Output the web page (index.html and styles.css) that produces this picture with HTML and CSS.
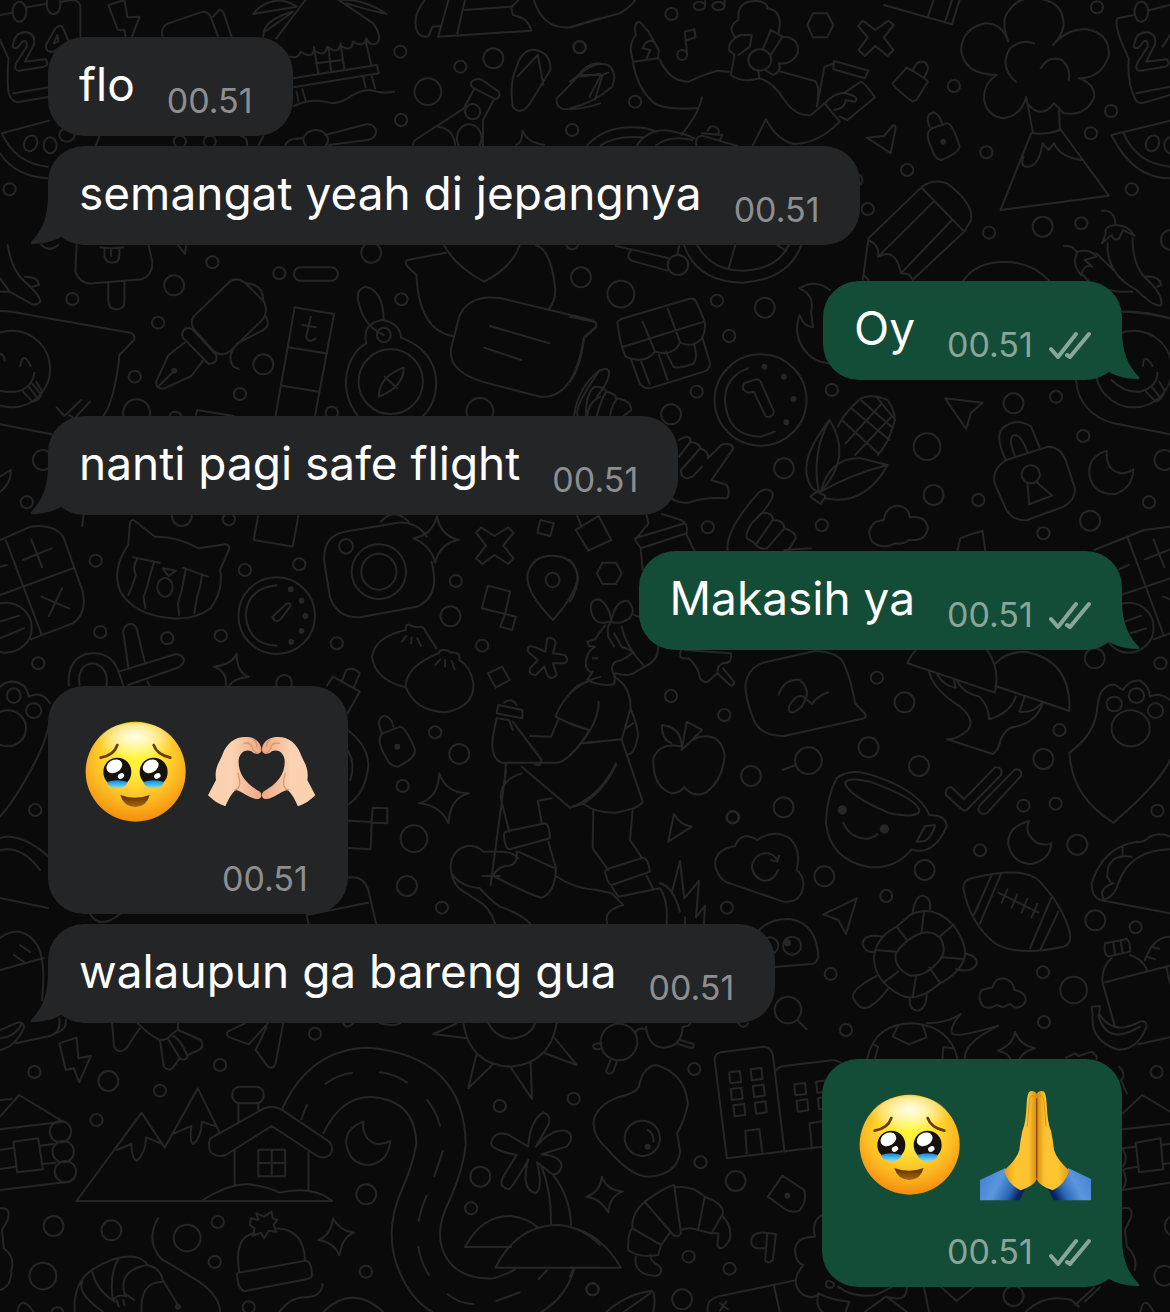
FILE: index.html
```html
<!DOCTYPE html>
<html lang="id">
<head>
<meta charset="utf-8">
<meta name="viewport" content="width=device-width, initial-scale=1">
<title>Chat</title>
<link rel="stylesheet" href="styles.css">
</head>
<body>
<svg class="wallpaper" viewBox="0 0 1170 1312" preserveAspectRatio="xMidYMin slice" aria-hidden="true">
<defs>
<ellipse id="s" rx="16" ry="18"/>
<ellipse id="m" rx="26" ry="30"/>
<ellipse id="l" rx="35" ry="40"/>
<ellipse id="f" class="solid" rx="5" ry="6"/>
<path id="w" d="M0 0l28-4 3 33-28 4z"/>
<path id="two" d="M35 130Q40 95 70 97Q95 105 88 135L65 185L120 178Q130 195 115 200L50 212Q35 212 42 190L70 140Q70 115 58 125Q50 140 42 145Q30 145 35 130Z"/>
</defs>
<g transform="scale(.3827 .3333)">
<path d="M0 45L30 38M70 22L118 12M158 6L185 0Q208 0 210 20V112M0 120L22 175Q18 230 22 275Q25 300 45 307L130 290M35 280L128 262M120 135L145 85Q160 70 165 85L178 120M120 135Q118 158 140 155L165 135M140 130L150 105L153 125Z"/>
<ellipse cx="51" cy="35" rx="18" ry="30"/><ellipse cx="140" cy="12" rx="18" ry="30"/><use href="#two"/>
<path d="M325 0L333 52L365 50L345 110M325 0L283 15L308 90H325L328 110M425 110Q418 80 440 70L530 35Q545 35 550 50L570 110M557 50L572 30Q580 28 585 40L605 110"/>
<path d="M662 42Q680 10 720 2Q750 0 775 20Q720 30 662 42M688 110Q685 60 765 35M692 95L760 40M722 115L798 0M885 0L975 70Q1000 110 985 130Q965 140 958 115Q952 145 922 125Q920 160 888 135Q885 165 855 140Q850 175 820 150Q815 178 785 155Q780 178 757 170M885 0Q950-5 1010 42Q960 30 905 10M820 140L832 222M858 140L865 215M890 130L900 210M955 120L970 195M825 190L895 180M832 222L900 210M765 235L985 195L990 220L767 262M950 232L955 262M972 230L980 265M775 275L780 305M790 268L798 300M768 318Q810 295 850 305Q880 318 915 290Q955 260 985 275Q1010 280 1030 275"/>
<path d="M1110 0Q1075 50 1090 95Q1100 115 1120 108L1130 80L1150 78M1172 0L1145 110L1388 92Q1382 55 1340 45L1335 22L1355 0M1215 0L1195 100M1215 30L1340 20M1395 0Q1420 90 1490 82L1568 55"/>
<path d="M1340 320Q1330 250 1350 200Q1365 145 1400 150Q1440 160 1438 210L1385 310Q1360 350 1340 320ZM1352 230L1405 165L1420 255M1568 190Q1530 190 1510 230L1455 295Q1450 330 1490 328Q1530 325 1568 310M1510 230L1568 222M1540 290L1568 230"/>
<path d="M1232 245Q1245 232 1260 240L1303 275Q1310 290 1295 298L1235 262Q1228 255 1232 245ZM1240 265L1212 325L1085 420Q1078 430 1080 438M1290 300L1262 360V438M1145 380Q1185 385 1190 438M1348 435Q1365 430 1365 392Q1380 430 1422 434"/>
<ellipse cx="1235" cy="335" rx="20" ry="23"/><ellipse cx="1226" cy="415" rx="32" ry="42"/>
<path d="M128 362L5 400Q40 490 125 500M0 460Q40 530 125 535M745 438Q750 415 790 415M850 405L960 372Q985 375 982 400Q980 415 960 420L860 435M645 438Q650 415 630 408M675 438L688 408M250 438L260 408"/>
<ellipse cx="80" cy="430" rx="17" ry="24" transform="rotate(15 80 430)"/><ellipse cx="131" cy="436" rx="17" ry="24"/><ellipse cx="175" cy="405" rx="20" ry="20"/><ellipse cx="825" cy="420" rx="32" ry="30"/>
<use href="#s" x="1046" y="155"/><use href="#s" x="1203" y="200"/><use href="#s" x="1515" y="142"/><use href="#s" x="1048" y="360"/><use href="#s" x="1495" y="390"/><use href="#s" x="25" y="568"/><use href="#s" x="470" y="425"/><use href="#s" x="548" y="425"/><use href="#m" x="1289" y="175"/><use href="#l" x="1118" y="275"/>
</g>
<g transform="translate(570) scale(.3827 .3333)">
<path d="M0 82L130 40Q160 20 170 0M0 245L40 210Q70 185 100 195Q125 220 110 260Q60 310 0 325M20 225H85L65 300M100 218L85 225"/>
<ellipse cx="338" cy="18" rx="15" ry="12"/><ellipse cx="388" cy="18" rx="16" ry="12"/><ellipse cx="293" cy="165" rx="13" ry="15"/>
<path d="M353 15V0M404 15V0M306 165L300 95L325 88L328 112L302 122"/>
<path d="M165 185L230 175L232 150L205 95L182 65Q165 65 172 105Q155 130 160 160ZM190 145Q200 115 218 125M190 145L210 150L200 175M165 190Q175 260 215 305Q240 330 330 325M235 180Q260 245 310 245Q345 225 385 212L415 215M345 292Q335 340 310 375L292 405"/>
<path d="M430 110Q410 80 440 60Q435 0 490 3Q520 10 515 25Q550 30 548 75L545 100M445 105L475 105L470 140L440 165M445 105Q415 120 415 150L430 165L420 225Q450 250 495 235L492 210M505 145L525 90L555 110L525 165M555 110Q600 110 595 160Q580 195 545 190Q555 215 530 225L510 210M550 215L640 243Q655 260 645 320M495 235Q530 245 560 300Q590 350 630 345L665 310L705 365M665 310Q690 280 715 278Q760 290 745 305L720 300Q720 325 690 330M645 320L665 200L685 192M690 183L780 212L770 235L688 208ZM715 280L760 245Q770 250 797 292L725 360L705 350M705 365Q650 430 585 432Q540 420 512 358L478 436"/>
<ellipse cx="496" cy="180" rx="30" ry="32"/>
<path d="M45 436Q90 380 165 382Q200 382 225 395M80 436Q120 405 190 412M175 436Q205 385 260 392Q300 400 325 415M225 436Q260 405 320 420M330 436Q325 410 345 407L438 438M345 400L398 405L392 420M360 392Q365 375 378 380Q392 385 388 402"/>
<path d="M635 40H672L688 75L672 112H635L620 75ZM765 62L798 90L832 62L846 75L820 112L845 150L830 168L798 138L770 168L754 150L778 112L753 78ZM820 15L998 73L1018 0M935 50L950 0M980 65L998 0M880 203L843 250Q845 262 895 305L905 300L935 245Q930 235 880 203ZM897 210Q905 180 925 185Q945 200 925 232"/>
<path d="M945 385L985 370Q1000 370 1018 440Q1015 460 970 480Q955 480 945 445Q925 400 945 385ZM940 380Q925 345 950 337Q968 345 972 372M775 413L820 408L845 375Q852 375 850 390L838 460L815 442Z"/>
<path d="M1145 125Q1125 60 1145 35Q1170-10 1215-5Q1290 0 1290 75Q1285 110 1262 135M1145 125Q1130 70 1085 70Q1025 85 1022 150Q1030 225 1115 225Q1080 250 1082 300Q1090 350 1135 355Q1180 345 1192 290L1210 400Q1245 405 1280 390L1278 325M1262 135Q1300 85 1350 88Q1410 100 1408 165Q1390 235 1330 235Q1370 250 1370 290Q1350 350 1290 340L1265 310Q1230 360 1195 310M1213 130Q1180 115 1150 145Q1120 200 1165 245M1230 205Q1250 165 1285 180Q1310 205 1303 240M1205 400L1125 630L1408 587L1283 390M1185 470Q1175 500 1195 500Q1225 500 1235 430L1250 450L1265 430Q1280 470 1335 480"/>
<path d="M1475 45L1430 55Q1420 80 1460 175Q1455 250 1478 300Q1485 312 1500 308L1568 285M1480 280L1568 260M1515 30L1568 15M1548 140L1568 105M1568 362L1415 405Q1470 535 1568 535M1447 400Q1480 490 1568 500"/>
<ellipse cx="1493" cy="35" rx="18" ry="30"/><use href="#two" x="1440"/><ellipse cx="1522" cy="430" rx="17" ry="24" transform="rotate(15 1522 430)"/><ellipse cx="1570" cy="436" rx="17" ry="24"/>
<path d="M765 840L780 715L920 560Q950 535 985 550Q1055 610 1048 660L1030 695L895 840M920 565L1030 695M950 605L805 770M998 660L865 820M780 720Q810 735 805 770Q850 740 865 820Q890 820 892 835M768 825L780 840M1028 842Q1060 785 1140 785Q1210 790 1252 842"/>
<path d="M1390 632Q1425 630 1425 675Q1395 680 1400 700L1390 730L1415 705Q1420 725 1435 715L1445 690L1475 708Q1460 675 1425 675M1405 730Q1400 820 1480 870Q1530 925 1545 915Q1550 880 1500 830Q1470 790 1470 715M1500 830Q1540 825 1545 855L1535 860M1290 738Q1315 735 1325 760Q1310 790 1335 825Q1345 790 1365 800L1345 780L1375 770Q1360 745 1325 755M1340 825Q1370 870 1440 875L1470 875M1375 760L1420 810M1442 935Q1500 935 1568 955"/>
<path d="M298 735Q330 845 450 848Q570 840 605 735M332 735Q370 812 450 812Q540 810 572 735M432 735L415 803M540 735L565 752M120 738L175 752L258 775M160 750Q145 770 160 782L255 812M285 738L280 765"/>
<ellipse cx="282" cy="795" rx="27" ry="30"/><use href="#f" x="975" y="425"/>
<use href="#s" x="265" y="42"/><use href="#s" x="25" y="142"/><use href="#s" x="170" y="305"/><use href="#s" x="1003" y="258"/><use href="#s" x="1088" y="457"/><use href="#s" x="881" y="510"/><use href="#s" x="1377" y="22"/><use href="#s" x="1414" y="333"/><use href="#s" x="1361" y="400"/><use href="#s" x="1468" y="568"/><use href="#s" x="778" y="627"/><use href="#s" x="1095" y="698"/><use href="#s" x="1336" y="670"/><use href="#m" x="1235" y="680"/><use href="#m" x="1570" y="720"/><use href="#s" x="748" y="540"/>
</g>
<g transform="translate(0 240) scale(.3827 .3333)">
<path d="M200 15L197 95Q210 135 245 130L370 118Q400 105 398 65L388 15M283 130V185Q285 208 303 208Q325 208 325 185V125M262 22Q290 28 322 22M273 25V50Q278 68 293 68Q312 68 312 45V25M290 30V48M465 15L483 42L487 15M108 15Q130 38 152 15"/>
<path d="M20 15Q30 90 65 125Q105 165 105 185Q95 200 80 190L25 155L0 115M0 155H25M65 110Q100 110 102 135L85 140M0 213Q15 212 30 215L340 278Q355 285 350 300L312 345Q300 480 270 528M0 553L135 583M0 340Q12 345 12 362M53 378Q60 330 80 378M0 452Q80 470 90 398M60 455L85 485Q110 480 108 450L95 425M75 440L95 470M85 432L105 460M148 502L168 528L212 480M180 525L195 535L235 485"/>
<ellipse cx="31" cy="387" rx="100" ry="115"/>
<path d="M600 125Q620 110 640 128L690 185Q702 215 685 240L600 335Q580 350 560 335L505 265Q495 240 510 225ZM645 130Q690 135 688 185M695 230Q710 260 680 275L620 310Q590 350 610 380L625 388M480 270Q490 258 505 270L565 345Q570 370 545 372L480 295Q472 285 480 270ZM482 308L440 345L408 425Q408 450 430 445L500 408L530 362M415 438L455 393"/>
<rect x="768" y="82" width="115" height="40" rx="18" ry="20"/>
<path d="M720 528L770 202L873 222L823 528M753 322L850 340M738 437L833 455M812 230L800 290Q805 312 825 295M790 255L825 262M512 525L515 510L610 528M675 825L663 900L765 920L780 825M218 825L215 858"/>
<ellipse cx="1021" cy="425" rx="84" ry="97"/><ellipse cx="1003" cy="285" rx="18" ry="22"/>
<path d="M935 528Q890 460 910 380Q925 330 957 310Q945 250 1000 240Q1045 250 1048 293Q1135 330 1140 425Q1140 490 1105 528M990 470Q990 410 1055 383Q1055 440 990 470M1005 410L1038 445M1003 238Q1000 150 955 140Q925 150 940 200Q955 260 1003 285"/>
<path d="M1165 38L1065 60Q1055 65 1065 80L1088 105Q1095 270 1182 288M1160 15Q1190 80 1265 125Q1340 80 1358 15M1400 15Q1440 30 1450 140Q1455 180 1432 210M1200 230Q1225 160 1310 175L1545 240Q1565 250 1555 265L1525 295Q1500 480 1410 470L1260 425Q1160 390 1182 310ZM1280 258L1435 310M1265 323L1362 360M1500 528Q1510 440 1568 390M1535 528Q1535 490 1568 470M0 755Q30 730 28 690L0 710"/>
<use href="#f" x="455" y="392"/>
<use href="#s" x="555" y="67"/><use href="#s" x="189" y="177"/><use href="#s" x="413" y="248"/><use href="#s" x="352" y="410"/><use href="#s" x="627" y="462"/><use href="#s" x="867" y="518"/><use href="#s" x="730" y="100"/><use href="#s" x="1049" y="178"/><use href="#s" x="70" y="787"/><use href="#s" x="598" y="838"/><use href="#s" x="458" y="533"/><use href="#s" x="1495" y="10"/><use href="#m" x="455" y="136"/><use href="#m" x="688" y="373"/><use href="#m" x="970" y="38"/><use href="#m" x="1518" y="112"/><use href="#m" x="475" y="828"/><use href="#l" x="357" y="518"/><use href="#l" x="1254" y="514"/><use href="#m" x="112" y="660"/>
</g>
<g transform="translate(570 240) scale(.3827 .3333)">
<path d="M0 230L65 245Q75 255 60 268L38 290Q25 390 0 425M125 255Q120 240 140 235L310 177Q325 172 332 190L352 245Q355 270 345 295Q320 325 288 308Q270 350 222 335Q195 375 145 350Q130 310 125 255ZM135 322L350 245M190 245L222 335M255 205L288 308M160 360L182 430Q195 450 215 443L350 395Q370 385 365 365L345 290M185 362L208 432M232 345L255 420M250 335L270 380Q280 388 320 372Q335 362 325 315"/>
<ellipse cx="498" cy="480" rx="120" ry="137"/>
<path d="M465 385Q405 410 405 480Q410 590 500 590L535 575M455 430L485 418Q497 418 500 430L533 515Q530 535 512 530L480 455L465 458Q445 450 455 430"/>
<use href="#f" x="508" y="380"/><use href="#f" x="559" y="410"/><use href="#f" x="584" y="477"/><use href="#f" x="565" y="547"/>
<path d="M680 150Q640 115 600 145Q640 165 630 215L635 262Q610 260 600 225Q580 290 620 340Q640 365 675 370"/>
<path d="M20 528Q10 500 75 395Q95 378 102 395Q105 420 70 470M42 528Q40 460 65 440Q90 440 95 455Q120 460 120 475Q160 480 160 510L140 528M70 528Q80 480 95 455M105 525Q110 490 125 475M285 600Q315 580 315 605Q340 610 340 625Q365 635 360 655L395 615Q420 605 427 625L370 720L410 735Q420 760 410 775Q350 770 310 788Q285 790 265 775M285 650L315 605M290 690L340 625M345 680L320 710Q290 725 290 690L330 640"/>
<path d="M412 932Q405 870 495 755Q520 740 530 760Q530 790 475 850Q450 895 470 900Q480 905 485 915L530 840M475 850L500 820Q530 815 530 840Q560 840 560 865Q590 875 590 895L570 932M485 915Q500 930 515 925L560 865M560 930L630 925"/>
<path d="M678 540Q610 640 618 700Q625 750 650 755M678 540Q740 650 655 755M678 540Q630 640 650 755M655 755Q680 650 760 655L830 675Q770 800 665 775M655 755Q740 700 830 675M628 770L655 792L668 768L645 755ZM700 560Q715 520 760 475Q790 460 830 480Q860 530 840 570Q835 600 805 645M710 540L805 640M735 505L835 600M760 480L840 560M720 610L815 490M745 645L840 530M800 470L850 540"/>
<path d="M790 905Q770 870 800 845L820 840Q825 800 855 797Q885 800 888 832Q930 825 935 865Q930 905 885 900Q870 915 850 910Q815 930 790 905ZM980 475L1078 488L1048 518L1035 567Z"/>
<path d="M1140 660L1250 620Q1280 620 1295 660L1318 740Q1325 775 1290 800L1195 840Q1160 845 1140 810L1110 730Q1100 690 1140 660ZM1138 658Q1110 590 1130 565Q1165 530 1205 560Q1215 590 1227 622M1163 650Q1140 585 1165 585Q1180 590 1195 635M1195 728L1200 793L1260 767L1218 725"/>
<ellipse cx="1204" cy="703" rx="24" ry="27"/>
<path d="M1403 632Q1350 650 1358 710Q1370 765 1425 762Q1470 745 1472 688Q1435 715 1410 680Q1400 660 1403 632ZM1322 420Q1330 520 1420 550L1568 583M1442 215Q1500 212 1568 235M1497 378Q1500 335 1522 378M1415 420Q1450 460 1490 455Q1535 440 1535 398M1505 455L1530 485Q1550 480 1553 450L1540 425M1520 440L1540 470M1012 932L1020 895Q1050 880 1078 873L1085 932"/>
<ellipse cx="1473" cy="387" rx="100" ry="115"/>
<path d="M15 870L75 828L108 900L48 932ZM18 825L30 860M200 825L205 850L170 900L185 925L305 880Q310 850 290 840L240 822M170 895L300 850M185 930L190 990M305 885L325 932"/>
<use href="#s" x="384" y="182"/><use href="#s" x="416" y="288"/><use href="#s" x="331" y="455"/><use href="#s" x="684" y="450"/><use href="#s" x="1270" y="470"/><use href="#s" x="1341" y="588"/><use href="#s" x="1067" y="780"/><use href="#s" x="1237" y="880"/><use href="#s" x="658" y="856"/><use href="#s" x="360" y="862"/><use href="#s" x="1513" y="787"/><use href="#m" x="509" y="203"/><use href="#m" x="264" y="523"/><use href="#m" x="559" y="685"/><use href="#m" x="950" y="765"/><use href="#m" x="1159" y="490"/><use href="#m" x="1359" y="842"/><use href="#m" x="1553" y="660"/><use href="#l" x="933" y="620"/><use href="#l" x="133" y="162"/>
</g>
<g transform="translate(0 500) scale(.3827 .3333)">
<path d="M0 120L80 80Q140 70 165 110L215 270Q230 340 190 370L80 418M15 120L108 402M0 285L190 205M60 180L135 145M82 118L110 202M108 290L180 325M162 265L128 348M0 200L18 195M0 365L50 347M0 415L62 385"/>
<ellipse cx="15" cy="383" rx="68" ry="75"/>
<path d="M335 135L340 65Q345 55 355 65L405 110Q460 108 520 145L590 133Q602 135 598 150L575 210Q585 270 550 325Q510 360 450 355Q350 345 315 275Q290 210 335 135M348 172L418 188M478 203L543 230M358 178Q345 200 355 225L345 260L335 285M402 190Q390 230 385 260L375 290L380 325M485 210Q480 240 475 270L465 310L468 345M528 225Q525 260 515 290L508 340M425 205L460 212L440 228Z"/>
<ellipse cx="431" cy="262" rx="20" ry="28"/><ellipse cx="723" cy="347" rx="100" ry="115"/>
<path d="M723 256Q645 265 642 347Q650 435 723 437M750 310Q762 308 758 320L735 355Q720 375 712 350Z"/>
<use href="#f" x="760" y="268"/><use href="#f" x="788" y="302"/><use href="#f" x="798" y="348"/><use href="#f" x="788" y="393"/><use href="#f" x="761" y="425"/>
<path d="M995 65Q1030 20 1068 65M900 95L1040 68Q1090 65 1115 110M1128 185L1132 210Q1145 290 1090 320L940 352Q880 355 862 290L848 190Q840 110 900 95M1142 48Q1150 105 1198 120Q1150 130 1137 188Q1125 135 1080 115Q1130 105 1142 48ZM1257 82L1292 108L1328 82L1342 98L1315 137L1342 175L1328 192L1292 165L1260 192L1244 175L1270 137L1244 98Z"/>
<ellipse cx="990" cy="215" rx="71" ry="82"/><ellipse cx="990" cy="215" rx="46" ry="54"/><ellipse cx="904" cy="139" rx="18" ry="22"/><ellipse cx="1444" cy="240" rx="18" ry="22"/>
<path d="M1412 60L1447 70L1438 108L1404 98ZM1275 257L1333 275L1320 342L1259 325ZM1320 342L1348 350L1338 390L1307 380ZM1275 520L1312 500L1332 540L1295 563ZM1445 360Q1375 280 1378 225Q1390 165 1445 167Q1505 170 1510 235Q1500 290 1445 360M1060 562Q980 540 972 470Q980 410 1060 390Q1060 365 1075 378L1090 382Q1108 375 1112 395L1140 445M1145 460Q1060 500 1060 560Q1085 635 1165 637Q1240 620 1237 550Q1230 500 1200 480Q1205 455 1180 458Q1155 440 1145 460M1062 408L1050 425M1076 412L1074 430M1090 415L1100 438M1150 478L1138 495M1163 480V500M1180 483L1188 508"/>
<path d="M180 556Q175 480 225 462Q290 450 310 515L322 556M208 556Q200 495 242 490Q285 500 278 556M335 500L322 395Q325 370 345 372Q358 378 360 400L378 485M310 515L460 462Q482 465 480 485Q475 498 460 505L335 555M385 545L390 556M618 462Q620 520 650 530Q610 535 598 558M590 556Q595 515 558 500Q605 495 618 462M722 556Q720 530 740 525Q765 525 762 556M855 556L870 530L940 575L908 640M893 545L905 510Q925 500 940 520L925 560"/>
<path d="M1000 700L1045 680Q1060 680 1085 750Q1085 775 1040 800Q1020 800 1010 775Q980 720 1000 700ZM998 700Q980 655 1005 647Q1025 655 1028 680M1148 820Q1165 880 1225 880Q1175 895 1172 970Q1150 915 1095 910Q1145 895 1148 820ZM1430 415Q1450 410 1452 430L1445 460L1475 465Q1490 480 1475 490L1445 490L1455 525Q1445 540 1432 530L1422 500L1400 525Q1380 525 1385 505L1405 480L1380 455Q1375 435 1395 440L1425 455Z"/>
<path d="M908 690Q965 740 962 800Q955 880 910 913M908 750Q930 790 915 840M0 560Q30 530 65 560Q75 580 75 590Q110 570 130 610M132 640Q130 700 90 790Q40 900 0 950"/>
<ellipse cx="36" cy="587" rx="18" ry="22"/><ellipse cx="88" cy="632" rx="20" ry="22"/><ellipse cx="20" cy="685" rx="48" ry="54"/>
<path d="M1292 685Q1275 770 1310 788L1460 788Q1500 770 1540 690M1302 615L1365 630V655L1298 640ZM1298 655L1330 660L1340 690M1298 655L1292 685M1318 608Q1335 590 1350 615M1340 665L1415 780Q1412 805 1395 790M1385 708L1440 710L1460 655M1568 530Q1480 560 1452 650Q1500 680 1540 690M1322 790L1318 850M1520 730L1568 725"/>
<use href="#f" x="1038" y="740"/>
<use href="#s" x="250" y="182"/><use href="#s" x="640" y="210"/><use href="#s" x="782" y="193"/><use href="#s" x="1191" y="243"/><use href="#s" x="262" y="396"/><use href="#s" x="437" y="415"/><use href="#s" x="577" y="407"/><use href="#s" x="880" y="430"/><use href="#s" x="1260" y="437"/><use href="#s" x="100" y="490"/><use href="#s" x="1137" y="697"/><use href="#s" x="1052" y="858"/><use href="#s" x="92" y="930"/><use href="#m" x="1177" y="349"/><use href="#m" x="1200" y="762"/>
</g>
<g transform="translate(570 500) scale(.3827 .3333)">
<path d="M105 365Q60 380 55 330Q50 300 75 298Q100 310 108 360Q120 300 150 302Q175 330 155 355Q130 375 105 365M105 370Q95 380 100 410L115 440M92 375L65 418L45 425L50 438L65 440Q38 460 42 500Q50 520 60 515L45 540Q75 560 115 553L118 530Q100 500 120 485Q145 480 165 455L135 440L115 400M135 380Q145 440 195 500M168 345L190 355M118 520Q150 530 165 520Q180 510 195 500Q235 480 230 430M60 475H72M45 545Q20 550 0 580M115 530Q160 560 158 625L135 720L190 905Q180 925 120 938Q70 940 35 912M75 605Q75 680 0 765M0 670L45 688M28 730L135 718M158 625Q185 700 175 720Q170 760 150 765M145 685L165 670M120 795Q90 870 35 910Q15 920 0 922"/>
<path d="M290 452Q280 480 310 475Q335 500 340 535Q350 550 360 545L385 520Q385 495 400 490Q425 490 420 460L300 450M385 520L420 557Q432 555 428 545L400 505M515 485L640 453Q700 455 715 490Q735 540 745 610L770 640Q778 655 760 657L560 708Q500 710 480 660Q450 570 462 535Q475 495 515 485M545 585Q560 535 600 540Q635 570 605 620Q570 655 572 620Q590 580 610 590L632 612Q650 585 675 577M555 810L590 795M85 188H120L135 220L120 252H85L70 220ZM0 180Q40 230 0 305"/>
<path d="M292 740Q235 725 218 775Q215 860 265 880Q285 880 298 862Q325 895 355 878Q400 840 404 765Q395 700 340 710L320 720M292 750L305 665L345 690ZM292 740Q290 680 240 675Q240 720 265 730"/>
<path d="M905 450Q890 465 882 490L1110 578Q1125 510 1090 450M1112 490Q1140 455 1190 455Q1310 480 1305 633L1112 558M938 515Q950 570 1020 620Q1060 660 1040 690Q1010 720 985 718L1105 762Q1120 750 1125 720Q1140 680 1165 680Q1220 665 1235 610M1012 545Q1030 580 1070 590Q1095 620 1095 658Q1150 640 1165 590M960 525Q980 560 1008 563L1003 540M1188 590L1175 635Q1210 640 1232 610"/>
<path d="M1568 600Q1540 575 1515 590Q1515 560 1490 542Q1460 540 1445 570L1425 555Q1385 550 1378 620Q1375 700 1305 758Q1310 890 1420 968Q1540 850 1568 780"/>
<ellipse cx="1422" cy="612" rx="20" ry="22"/><ellipse cx="1480" cy="587" rx="20" ry="22"/><ellipse cx="1530" cy="632" rx="20" ry="22"/><ellipse cx="1465" cy="685" rx="50" ry="54"/><ellipse cx="1460" cy="383" rx="65" ry="75"/>
<path d="M1370 150L1500 90L1568 80M1458 115L1550 402M1440 285L1568 235M1502 178L1568 148M1525 118L1553 202M1435 208L1460 195M1450 365L1492 347M1465 400L1505 385M1525 418L1568 400M1550 290L1568 298"/>
<use href="#s" x="264" y="588"/><use href="#s" x="403" y="645"/><use href="#s" x="802" y="533"/><use href="#s" x="1279" y="690"/><use href="#s" x="426" y="952"/><use href="#s" x="1185" y="917"/><use href="#s" x="1269" y="911"/><use href="#s" x="1535" y="932"/><use href="#s" x="1543" y="490"/><use href="#m" x="874" y="607"/><use href="#m" x="780" y="742"/><use href="#m" x="912" y="798"/><use href="#m" x="473" y="828"/><use href="#m" x="558" y="922"/><use href="#m" x="1237" y="777"/><use href="#m" x="1371" y="475"/><use href="#l" x="623" y="782"/>
</g>
<g transform="translate(300 760) scale(.3333)">
<path d="M145 182L215 186L212 268L145 264M215 186L218 143L262 145V190L215 188M145 353Q190 345 205 390L228 490M25 490L20 465L205 428"/>
<path d="M665 40Q600 60 602 115L628 215M618 30L572 375M548 348H600M665 20L810 143Q900 110 948 10M755 115L713 122L725 188M880 150L878 265L925 330M998 150L990 240L1025 292M612 228Q610 215 625 213L735 190Q748 192 750 235L630 268Q615 268 612 228M745 245L768 325Q765 400 725 413Q700 410 575 345M655 275L765 325M650 275Q655 320 615 318Q590 325 578 348M655 295Q640 275 600 275L550 275Q530 255 500 258Q455 270 452 320Q455 380 500 400L530 420Q570 440 585 490M455 340Q480 380 540 385Q570 420 600 440Q660 460 690 490M768 348Q820 385 890 390L935 400L970 435Q910 450 922 490M918 345Q910 330 930 325L1030 293Q1045 295 1050 335L935 375Q925 375 918 345M935 380L955 410L1080 385Q1105 420 1100 490M1040 348L1060 388"/>
<path d="M1080 370Q1120 380 1140 455M1115 400L1140 303L1153 415L1197 363L1188 472L1215 437L1212 490M1155 472V490M1122 162Q1140 195 1175 200L1105 245Z"/>
<path d="M490 790Q510 915 632 920Q750 910 770 790M565 790Q590 835 635 836Q690 830 705 790M470 790L400 822L500 835M530 880L505 985L580 912M632 922L696 1017L692 908M765 835L830 915L735 880"/>
<circle cx="957" cy="846" r="55"/>
<path d="M1038 800Q1045 862 1092 863Q1145 860 1148 800M1005 820Q1015 800 1038 808M905 850Q875 850 880 862Q885 872 905 865M932 900L918 935Q925 948 940 935L950 905M1140 840L1180 852Q1188 868 1165 862L1130 850M1150 800Q1170 800 1170 790M130 790Q140 810 160 790M240 790Q280 800 300 790M1315 790Q1330 812 1345 790"/>
<circle cx="426" cy="443" r="18"/><circle cx="1298" cy="172" r="18"/><circle cx="1281" cy="443" r="18"/><circle cx="45" cy="821" r="18"/><circle cx="1183" cy="927" r="18"/><circle cx="321" cy="378" r="30"/><circle cx="342" cy="236" r="40"/>
</g>
<g transform="translate(670 760) scale(.3333)">
<path d="M500 55Q540 20 620 50Q750 95 778 165Q830 165 830 200Q790 290 725 268Q680 325 600 322Q480 300 468 190Q470 110 500 55ZM525 70Q530 50 600 65Q750 120 748 155Q735 175 660 160Q540 110 525 70ZM765 198L795 195Q790 225 765 243L740 245ZM520 188Q540 235 590 236Q610 235 622 222"/>
<circle class="solid" cx="517" cy="150" r="11"/><circle class="solid" cx="643" cy="207" r="11"/>
<path d="M828 105Q825 80 845 82L882 118L975 22Q1000 20 993 45L890 150Q882 155 875 148ZM925 150Q925 140 935 130L1035 28Q1058 25 1053 48L950 160Q930 165 925 150ZM1078 183Q1010 200 1015 255Q1030 312 1085 312Q1140 300 1144 250Q1100 265 1075 220Q1068 200 1078 183Z"/>
<path d="M195 258Q130 270 136 320Q150 365 180 370L340 425Q395 430 400 375Q400 345 380 330Q395 270 360 235Q310 205 262 240Q215 210 195 258ZM325 330Q310 365 280 362Q245 350 246 315Q260 275 295 280Q315 285 322 302M328 287L322 305L303 300M268 510Q300 475 360 477Q440 490 445 590Q440 610 425 612L303 622"/>
<circle cx="366" cy="557" r="27"/><circle cx="300" cy="557" r="25"/><circle class="solid" cx="352" cy="548" r="8"/>
<path d="M1500 230Q1470 215 1440 230Q1420 250 1400 245Q1300 260 1265 370Q1265 410 1290 420L1500 460M1290 420Q1330 420 1345 370Q1380 270 1500 268M1385 290Q1310 280 1312 350L1325 372M1358 262V285M1300 415Q1285 385 1330 370M460 463L560 415L528 522L505 480Z"/>
<path d="M905 355Q1060 315 1110 365Q1180 440 1200 520Q1205 555 1180 560Q1040 590 975 550Q900 490 880 385Q880 360 905 355ZM965 345L912 465M993 342L930 490M1145 412L1080 565M1165 455L1112 568M985 398L1105 458M1012 388L995 428M1042 403L1025 443M1072 417L1055 458M1102 432L1085 472"/>
<path d="M720 465Q790 430 850 495Q890 550 885 590Q870 640 810 670Q740 730 690 705Q610 660 612 590Q620 530 680 500ZM740 525Q780 505 812 535Q835 580 800 610Q760 655 715 645Q670 620 678 580Q700 545 740 525ZM762 455L755 517M850 495L808 530M880 597L818 592M810 668L778 622M728 712L738 648M640 668L685 635M615 570L680 575M680 500L712 542M728 460Q735 405 760 407Q785 415 780 448M640 530Q580 520 578 552Q585 580 615 575M885 580Q925 590 920 612Q905 640 858 628M720 712Q715 750 745 752Q770 745 770 700M620 648Q540 690 550 715Q570 755 600 740Q630 720 655 685"/>
<path d="M940 740Q920 715 935 690L968 682Q975 655 1000 655Q1030 660 1033 690Q1065 695 1068 720Q1060 745 1035 742L1018 732L1000 742L980 735Q960 748 940 740ZM382 780L410 808M592 895Q615 790 730 790Q840 800 862 895M685 795L668 830L717 853L770 832L758 795M615 895L625 860L612 855M818 895L820 862L850 865M770 790Q830 790 872 762Q840 800 845 820Q860 835 985 797Q880 850 885 895M1020 895Q1015 880 983 872Q1030 855 1035 815Q1050 855 1095 865Q1060 875 1050 895"/>
<circle cx="354" cy="750" r="40"/>
<path d="M1305 550L1370 537Q1382 545 1380 575L1315 590Q1300 580 1305 550M1330 545L1335 585M1352 540L1358 580M1325 595Q1295 620 1297 665L1335 800M1380 585Q1415 595 1432 630M1305 667L1500 617M1425 600Q1450 530 1500 530M1445 560L1468 567M1430 590L1455 598M1405 853L1500 832M1490 625L1500 670M1265 740L1290 738L1288 762Q1330 830 1410 785Q1430 780 1430 800Q1400 875 1340 868Q1260 840 1268 765ZM1285 765Q1310 860 1410 800M1188 893L1215 880L1225 888L1265 875Q1285 890 1280 898"/>
<circle cx="188" cy="172" r="18"/><circle cx="930" cy="271" r="18"/><circle cx="649" cy="408" r="18"/><circle cx="482" cy="642" r="18"/><circle cx="528" cy="810" r="18"/><circle cx="1119" cy="637" r="18"/><circle cx="1122" cy="786" r="18"/><circle cx="1397" cy="502" r="18"/><circle cx="1460" cy="936" r="18"/><circle cx="463" cy="349" r="30"/><circle cx="764" cy="330" r="30"/><circle cx="1222" cy="254" r="30"/><circle cx="1276" cy="481" r="30"/><circle cx="1211" cy="690" r="40"/>
</g>
<path d="M0 838Q20 832 48 856M0 850Q22 845 40 870M0 898L48 908M0 938Q22 922 38 946Q46 962 42 1000M20 945L30 952M14 955L24 962M0 970L44 958M90 914Q100 930 120 914"/>
<g transform="translate(0 1000) scale(.3827 .3333)">
<path d="M0 90L45 68Q65 65 62 85Q40 140 0 150M0 115Q40 110 55 75M42 130L130 108Q160 100 155 55M145 100Q175 90 172 60M155 130L200 113L205 175L237 168L207 247L193 205L172 210ZM293 70L298 140Q310 165 330 145L365 85M360 70Q390 105 418 120L428 200Q440 215 450 205L470 175M418 120Q440 120 445 105L465 90V70M445 105Q470 110 490 170Q485 185 470 175L438 115M465 90L525 120Q535 140 520 150L490 165M640 70L595 95Q588 105 600 112L650 133L700 70M697 80L668 150L700 200Q715 210 720 190L740 70"/>
<path d="M0 350L50 285L165 365L0 388M0 300L30 297M0 570L180 545M35 425L100 415L112 508L45 517ZM0 450L35 443M105 437L140 432M0 507L40 500M110 492L145 488"/>
<ellipse cx="158" cy="395" rx="28" ry="32"/><ellipse cx="165" cy="455" rx="28" ry="32"/><ellipse cx="171" cy="515" rx="28" ry="32"/>
<path d="M575 400L517 265L430 443L370 338L200 603H868M305 450L343 432Q345 480 358 482Q380 460 382 412L420 430M455 400L500 378Q495 430 505 432Q525 415 528 365L565 380M623 310V362M675 310V330M550 415L690 325Q712 315 735 328L860 425Q875 445 862 465Q845 480 825 465L710 378L590 465Q565 475 550 455Q542 430 550 415ZM613 450V553M806 455V570M710 449V529M675 489H745M530 600Q600 550 650 553Q700 560 730 578Q820 555 868 603"/>
<rect x="607" y="260" width="82" height="50" rx="20" ry="23"/><rect x="675" y="449" width="70" height="80"/>
<path d="M738 325Q810 145 965 143Q1215 170 1217 435Q1210 510 1175 600Q1130 700 1165 770Q1200 840 1290 835Q1330 820 1345 808M845 400Q890 290 970 291Q1085 300 1088 430Q1080 490 1050 570Q1010 670 1030 770Q1060 890 1130 936M1500 808Q1480 890 1415 936M850 252Q880 225 920 218M993 217Q1030 222 1063 247M1116 300Q1140 335 1150 377M1157 453L1135 528M1115 587Q1100 625 1094 662M1093 740Q1100 790 1121 825M1170 883Q1200 912 1237 912M1297 903L1358 877M1408 837L1430 810M802 315L787 358M950 365Q900 385 905 435Q915 495 965 495Q1015 485 1020 423Q985 445 960 415Q945 390 950 365Z"/>
<path d="M1380 440Q1385 360 1420 337Q1445 350 1430 380L1400 440Q1440 385 1480 392Q1505 410 1480 440L1415 463Q1470 470 1467 500Q1460 530 1440 520L1403 487Q1420 560 1400 580Q1360 570 1380 480Q1340 560 1330 568Q1300 560 1315 530L1350 465Q1285 450 1283 430Q1290 390 1330 405ZM1415 500Q1440 570 1440 670M1445 525Q1490 590 1492 675M1335 741H1215Q1260 645 1335 648Q1380 655 1405 682M1568 803H1295Q1350 675 1460 675Q1520 680 1568 735"/>
<path d="M625 815Q610 710 665 700M725 685Q795 690 797 783M620 830Q615 820 625 818L800 782Q815 785 815 825Q815 835 800 838L640 873Q622 870 620 830M655 655L675 660L670 640L690 650L710 635L712 655L725 660L715 675L722 695L702 692L690 715L682 698L660 708L665 685L653 675ZM870 655Q890 695 925 698Q895 710 887 765Q870 725 832 720Q865 705 870 655Z"/>
<path d="M270 936Q200 880 215 845M195 936Q190 850 240 810Q300 765 350 770Q380 778 385 795Q420 805 425 840L465 915M240 810Q250 870 300 905M310 775Q285 820 295 900Q310 880 330 890M385 795Q310 810 325 880L350 900M425 845Q365 845 370 936M305 900L310 920M322 900L325 915M413 655Q380 720 420 775L520 845Q575 890 575 936M730 936Q760 890 800 892Q840 890 843 852M845 936Q920 850 1002 936M45 936Q55 880 88 936M0 625Q30 620 20 660L5 690L10 745Q40 770 30 810Q30 860 0 870"/>
<use href="#f" x="465" y="920"/>
<use href="#s" x="90" y="216"/><use href="#s" x="418" y="272"/><use href="#s" x="252" y="360"/><use href="#s" x="575" y="195"/><use href="#s" x="1306" y="318"/><use href="#s" x="1499" y="296"/><use href="#s" x="1231" y="625"/><use href="#s" x="569" y="666"/><use href="#s" x="561" y="786"/><use href="#s" x="956" y="815"/><use href="#s" x="1548" y="868"/><use href="#s" x="650" y="922"/><use href="#s" x="150" y="940"/><use href="#m" x="283" y="243"/><use href="#m" x="957" y="583"/><use href="#m" x="1255" y="530"/><use href="#m" x="140" y="678"/><use href="#m" x="291" y="691"/><use href="#l" x="112" y="828"/><use href="#l" x="489" y="714"/>
</g>
<g transform="translate(570 1000) scale(.3827 .3333)">
<path d="M180 260Q190 200 225 195Q300 220 308 310Q300 360 280 400L288 455Q280 525 205 530Q160 530 100 450Q50 400 65 350Q80 310 130 290Q170 280 180 260M203 390Q220 400 218 425M410 475L378 180Q378 160 395 157L505 140Q525 140 530 165L560 450M410 475L660 440M540 210Q545 200 560 198L690 180L708 188M462 460L458 392L495 387L502 455M632 445L626 370L660 364M0 682Q80 700 133 803H0M0 830L10 803"/>
<ellipse cx="189" cy="415" rx="46" ry="53"/><use href="#f" x="203" y="440"/>
<use href="#w" x="416" y="217"/><use href="#w" x="472" y="208"/><use href="#w" x="420" y="267"/><use href="#w" x="478" y="258"/><use href="#w" x="427" y="316"/><use href="#w" x="483" y="308"/><use href="#w" x="586" y="253"/><use href="#w" x="643" y="245"/><use href="#w" x="592" y="302"/><use href="#w" x="648" y="295"/>
<path d="M83 530Q95 570 138 575Q105 585 100 637Q80 595 43 590Q80 575 83 530ZM555 527L612 570Q620 600 600 632Q580 640 565 630L517 590ZM195 605Q250 560 272 555L290 700Q280 715 270 705ZM195 605Q160 640 163 685L238 735L260 700M163 685Q150 700 152 750Q180 775 230 765L238 735M275 562Q320 555 352 590L335 690Q310 680 290 690M355 592Q400 610 400 640L370 700L335 690M400 650Q425 680 417 720Q395 760 385 735L388 700H370M172 770Q165 825 225 828Q250 815 230 795Q210 785 210 765M500 745Q475 748 473 725Q475 695 510 698L538 702L530 780Q515 795 510 780L515 705M500 745H510"/>
<path d="M660 645Q630 660 640 710Q590 710 588 750Q590 790 610 795Q570 850 610 885Q640 900 650 880Q640 920 660 936M690 850Q665 830 670 860Q690 870 690 850M700 860Q740 895 800 885L840 862M880 862Q880 900 850 895L825 890L770 936M650 880Q680 900 730 905L720 936M828 890L880 936M360 936Q355 900 385 890L585 842M533 857L548 936M392 910L412 928M408 905L392 932M95 936Q150 880 215 873Q225 890 218 936M140 936L210 880M970 862L1010 903L1055 862M925 862L938 936M1190 936Q1240 880 1310 900L1330 920M1320 915L1370 862M1345 905L1385 862M1490 936Q1500 880 1525 936"/>
<path d="M1435 200Q1455 225 1440 240L1455 280M1445 340L1495 285L1568 335M1445 388L1568 372M1478 428L1543 415L1550 508L1487 517ZM1445 445L1478 440M1545 435L1568 432M1450 507L1483 500M1550 492L1568 490M1445 570L1568 548M1445 450Q1460 475 1445 500M1445 510Q1460 540 1445 568M1445 625Q1475 620 1465 655L1450 690L1455 740Q1485 770 1475 810"/>
<use href="#f" x="568" y="587"/>
<use href="#s" x="341" y="487"/><use href="#s" x="310" y="770"/><use href="#s" x="417" y="806"/><use href="#s" x="59" y="868"/><use href="#m" x="433" y="543"/><use href="#m" x="1159" y="888"/><use href="#m" x="293" y="898"/><use href="#m" x="1553" y="827"/><use href="#m" x="1580" y="678"/>
</g>
</svg>

<svg class="sprites" aria-hidden="true">
<defs>
<radialGradient id="skin" cx=".5" cy=".34" r=".68"><stop offset="0" stop-color="#fff838"/><stop offset=".3" stop-color="#ffea3a"/><stop offset=".68" stop-color="#fdb921"/><stop offset="1" stop-color="#f3890c"/></radialGradient>
<radialGradient id="shine" cx=".5" cy=".3" r=".5"><stop offset="0" stop-color="#fff" stop-opacity=".9"/><stop offset=".5" stop-color="#fff" stop-opacity=".5"/><stop offset="1" stop-color="#fff" stop-opacity="0"/></radialGradient>
<linearGradient id="tear" x1="0" y1="0" x2="0" y2="1"><stop offset="0" stop-color="#1287d8"/><stop offset="1" stop-color="#7fe0ff"/></linearGradient>
<linearGradient id="mouth" x1="0" y1="0" x2="0" y2="1"><stop offset="0" stop-color="#5c2e05"/><stop offset="1" stop-color="#a8690c"/></linearGradient>
<linearGradient id="pale" x1="0" y1="0" x2="1" y2="0"><stop offset="0" stop-color="#fbd0ac"/><stop offset=".45" stop-color="#fbd3b3"/><stop offset="1" stop-color="#eda882"/></linearGradient>
<linearGradient id="gold" x1="0" y1="0" x2="1" y2="0"><stop offset="0" stop-color="#e89a10"/><stop offset=".35" stop-color="#ffc62e"/><stop offset=".75" stop-color="#fdc233"/><stop offset="1" stop-color="#d98a0c"/></linearGradient>
<linearGradient id="cuff" x1="0" y1="0" x2="1" y2=".35"><stop offset="0" stop-color="#3f7fd0"/><stop offset=".5" stop-color="#5a96dc"/><stop offset=".8" stop-color="#2d68b8"/><stop offset="1" stop-color="#06245c"/></linearGradient>
</defs>
<symbol id="face" viewBox="120 111 333 333">
<circle cx="287" cy="275" r="150" fill="url(#skin)"/>
<ellipse cx="287" cy="196" rx="120" ry="66" fill="url(#shine)"/>
<g id="eye"><ellipse cx="232" cy="276" rx="42" ry="43" fill="#17110d"/><path d="M201 306Q232 296 263 306Q258 324 232 325Q206 324 201 306Z" fill="url(#tear)"/><ellipse cx="223" cy="259" rx="25" ry="19" transform="rotate(-30 223 259)" fill="#fff"/><ellipse cx="243" cy="288" rx="10" ry="8" transform="rotate(-30 243 288)" fill="#fff"/></g>
<use href="#eye" x="109"/>
<path d="M182 233Q222 226 232 195M341 195Q351 224 391 233" fill="none" stroke="#6b3a06" stroke-width="8" stroke-linecap="round"/>
<path d="M241 345Q285 362 329 345Q320 380 286 381Q251 380 241 345Z" fill="url(#mouth)"/>
</symbol>
<symbol id="heart-hands" viewBox="498 111 333 333">
<g id="heart-hand"><path d="M504 346L528 300C522 262 540 245 548 222C562 185 590 168 622 171C648 172 666 192 664 212C660 223 648 223 640 218C625 205 600 212 596 240C594 280 615 310 660 335C668 345 664 355 655 357C630 358 610 335 588 330C575 338 565 360 556 379C535 372 518 360 504 346Z" fill="url(#pale)"/><path d="M612 190Q628 186 636 198Q636 212 652 219M640 178Q652 186 650 200M584 330Q608 326 594 280" fill="none" stroke="#dc9670" stroke-width="4" stroke-linecap="round"/></g>
<use href="#heart-hand" transform="translate(1330) scale(-1 1)"/>
</symbol>
<symbol id="pray" viewBox="480 120 333 333">
<g id="pray-hand"><path d="M480 390L556 354Q568 400 620 410Q608 430 600 451H480Z" fill="url(#cuff)"/><path d="M651 132Q644 120 630 124Q622 128 620 160Q618 220 607 243Q601 270 598 300Q590 328 552 362Q566 404 602 421Q646 406 651 385Z" fill="url(#gold)"/><path d="M647 150Q645 135 636 137Q628 140 627 165L622 230" fill="none" stroke="#dc930e" stroke-width="3"/></g>
<use href="#pray-hand" transform="translate(1300) scale(-1 1)"/>
<path d="M650 145V385" stroke="#8a4a05" stroke-width="4"/>
</symbol>
<symbol id="ticks" viewBox="0 0 42 28"><path d="M2 18L9 26L27 3M18 24L21 26L40 3" fill="none" stroke="currentColor" stroke-width="4" stroke-linecap="round" stroke-linejoin="round"/></symbol>
<symbol id="tail" viewBox="0 0 50 50"><path d="M18 0C18 22 12 36 1 47Q0 50 3 49C14 49 24 46 31 42L42 30V0Z" fill="currentColor"/></symbol>
</svg>

<main class="chat">
<article class="bubble in">
<p class="text">flo</p><div class="meta"><time>00.51</time></div>
</article>
<article class="bubble in follow">
<svg class="tail" aria-hidden="true"><use href="#tail"/></svg>
<p class="text">semangat yeah di jepangnya</p><div class="meta"><time>00.51</time></div>
</article>
<article class="bubble out">
<svg class="tail" aria-hidden="true"><use href="#tail"/></svg>
<p class="text">Oy</p><div class="meta"><time>00.51</time><svg class="ticks" role="img" aria-label="Terkirim"><use href="#ticks"/></svg></div>
</article>
<article class="bubble in">
<svg class="tail" aria-hidden="true"><use href="#tail"/></svg>
<p class="text">nanti pagi safe flight</p><div class="meta"><time>00.51</time></div>
</article>
<article class="bubble out">
<svg class="tail" aria-hidden="true"><use href="#tail"/></svg>
<p class="text">Makasih ya</p><div class="meta"><time>00.51</time><svg class="ticks" role="img" aria-label="Terkirim"><use href="#ticks"/></svg></div>
</article>
<article class="bubble in stacked">
<div class="emojis"><svg role="img" aria-label="Wajah menahan air mata"><use href="#face"/></svg><svg role="img" aria-label="Tangan membentuk hati"><use href="#heart-hands"/></svg></div>
<div class="meta"><time>00.51</time></div>
</article>
<article class="bubble in follow">
<svg class="tail" aria-hidden="true"><use href="#tail"/></svg>
<p class="text">walaupun ga bareng gua</p><div class="meta"><time>00.51</time></div>
</article>
<article class="bubble out stacked">
<svg class="tail" aria-hidden="true"><use href="#tail"/></svg>
<div class="emojis"><svg role="img" aria-label="Wajah menahan air mata"><use href="#face"/></svg><svg role="img" aria-label="Tangan terlipat"><use href="#pray"/></svg></div>
<div class="meta"><time>00.51</time><svg class="ticks" role="img" aria-label="Terkirim"><use href="#ticks"/></svg></div>
</article>
</main>
</body>
</html>
```
FILE: styles.css
```css
* { box-sizing: border-box; }

body {
  margin: 0;
  position: relative;
  min-height: 100vh;
  background: #0a0a0a;
  color: #fff;
  font-family: Inter, "Liberation Sans", sans-serif;
}

.wallpaper {
  position: absolute;
  inset: 0;
  width: 100%;
  height: 100%;
  fill: none;
  stroke: #262627;
  stroke-width: 2px;
  stroke-linecap: round;
  stroke-linejoin: round;
}
.wallpaper * { vector-effect: non-scaling-stroke; }
.wallpaper .solid { fill: #262627; }

.sprites { position: absolute; width: 0; height: 0; }

.chat {
  position: relative;
  display: flex;
  flex-direction: column;
  align-items: flex-start;
  gap: 36px;
  padding: 37px 48px 25px;
}

.bubble {
  position: relative;
  display: flex;
  align-items: flex-end;
  gap: 32px;
  max-width: 100%;
  padding: 17px 31px 15px;
  border-radius: 36px;
}
.bubble.in { background: #242527; color: #242527; padding-right: 34px; }
.bubble.out { background: #144d37; color: #144d37; align-self: flex-end; }
.bubble.follow { margin-top: -26px; }

.text {
  margin: 0 0 7px;
  color: #fff;
  font-size: 46px;
  line-height: 60px;
}

.meta {
  display: flex;
  align-items: center;
  gap: 10px;
  color: #8d8e90;
  font-size: 34px;
  line-height: 40px;
}
.meta time { min-width: 92px; }
.out .meta { color: #89a69b; }
.ticks { width: 42px; height: 28px; }

.bubble.stacked {
  flex-direction: column;
  gap: 31px;
  padding-top: 31px;
  padding-left: 32px;
}
.emojis { display: flex; gap: 15px; }
.emojis svg { width: 111px; height: 111px; }
.bubble.in.stacked .emojis { margin-right: -3px; }

.tail {
  position: absolute;
  bottom: 0;
  left: -18px;
  width: 50px;
  height: 50px;
}
.out .tail {
  left: auto;
  right: -18px;
  transform: scaleX(-1);
}
```
